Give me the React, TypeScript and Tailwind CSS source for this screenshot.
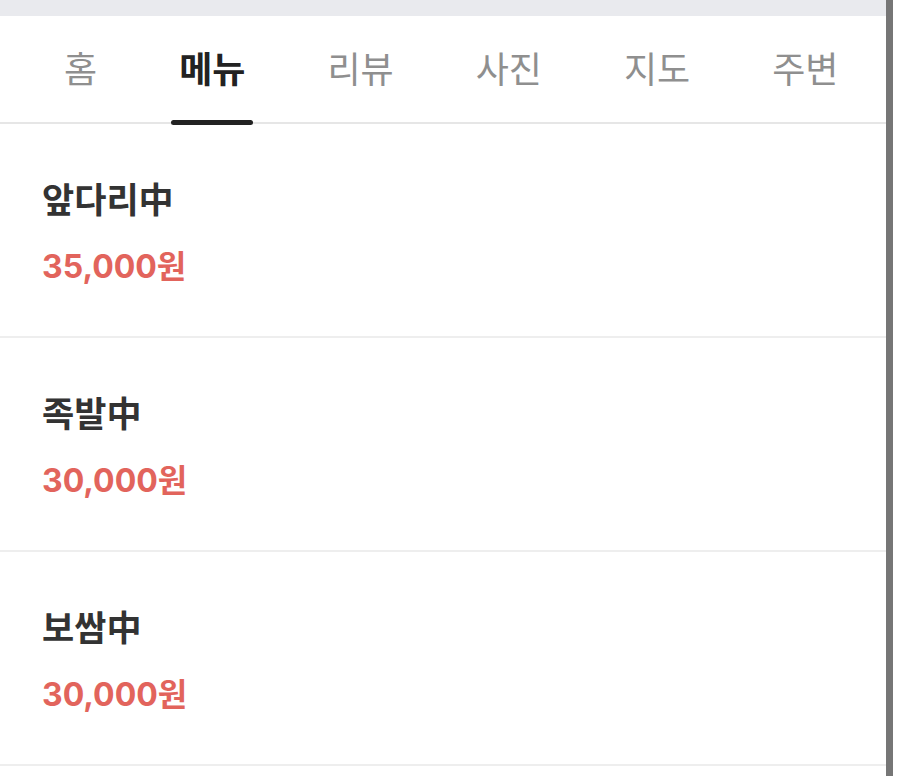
import React from "react";

const tabs = ["홈", "메뉴", "리뷰", "사진", "지도", "주변"];
const activeTab = "메뉴";

const menuItems = [
  { name: "앞다리中", price: "35,000원" },
  { name: "족발中", price: "30,000원" },
  { name: "보쌈中", price: "30,000원" },
];

export default function App() {
  return (
    <div
      className="flex w-[900px] h-[776px] overflow-hidden bg-white"
      style={{ fontFamily: '"Noto Sans CJK KR", "Noto Sans", sans-serif' }}
    >
      <div className="flex-1 flex flex-col min-w-0">
        <div className="h-[16px] bg-[#e9eaee] shrink-0" />

        <nav className="flex items-stretch h-[108px] pl-[56px] gap-[66px] border-b-2 border-[#e6e6e6] shrink-0">
          {tabs.map((t) => {
            const on = t === activeTab;
            return (
              <div key={t} className="relative flex items-center px-2 pb-[4px]">
                <span
                  className={`text-[36px] leading-none ${
                    on ? "font-bold text-[#222222]" : "font-normal text-[#8f8f8f]"
                  }`}
                >
                  {t}
                </span>
                {on && (
                  <span className="absolute left-0 right-0 bottom-[-3px] h-[5px] rounded-full bg-[#222222]" />
                )}
              </div>
            );
          })}
        </nav>

        <ul className="flex flex-col">
          {menuItems.map((m) => (
            <li
              key={m.name}
              className="h-[214px] flex flex-col px-[42px] pt-[54px] border-b-2 border-[#eeeeee]"
            >
              <span className="text-[35px] leading-[40px] font-bold text-[#333333]">{m.name}</span>
              <span
                className="mt-[29px] text-[32px] leading-[40px] font-bold text-[#e2645c]"
                style={{ fontFamily: 'Inter, "Noto Sans CJK KR", sans-serif' }}
              >
                {m.price}
              </span>
            </li>
          ))}
        </ul>
      </div>

      <div className="w-[7px] h-full bg-[#767676] shrink-0" />
      <div className="w-[7px] h-full bg-white shrink-0" />
    </div>
  );
}
